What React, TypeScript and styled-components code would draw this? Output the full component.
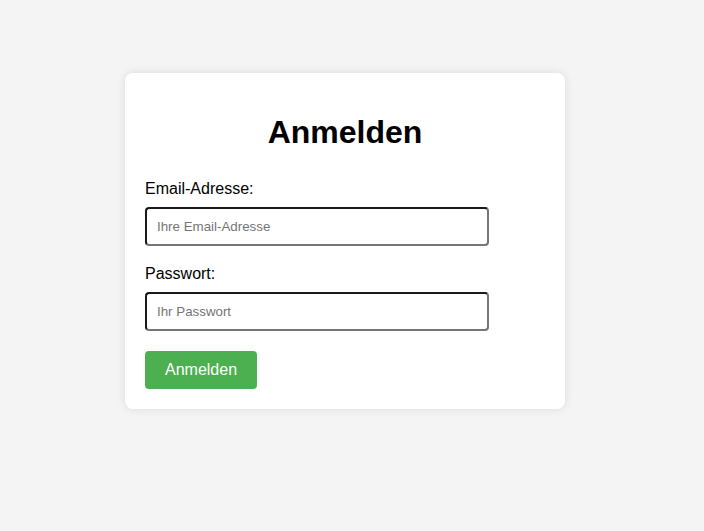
import React from "react";
import styled, { createGlobalStyle } from "styled-components";

const GlobalStyle = createGlobalStyle`
  html, body {
    margin: 0;
    padding: 0;
    background: #f4f4f4;
    font-family: "Liberation Sans", Arial, sans-serif;
  }
`;

const Page = styled.div`
  min-height: 531px;
  box-sizing: border-box;
  padding: 73px 0 0 125px;
`;

const Card = styled.div`
  width: 440px;
  box-sizing: border-box;
  padding: 20px;
  background: #ffffff;
  border-radius: 8px;
  box-shadow: 0 0 10px rgba(0, 0, 0, 0.1);
`;

const Title = styled.h1`
  margin: 21px 0 29px;
  font-size: 32px;
  font-weight: bold;
  text-align: center;
  color: #000;
`;

const Group = styled.div`
  margin-bottom: 19px;
`;

const Label = styled.label`
  display: block;
  font-size: 16px;
  color: #000;
  margin-bottom: 9px;
`;

const Input = styled.input`
  display: block;
  width: 320px;
  padding: 10px;
  font-family: "Liberation Sans", Arial, sans-serif;
  font-size: 13.333px;
  border-width: 2px;
  border-style: solid;
  border-color: #1a1a1a #767676 #767676 #1a1a1a;
  border-radius: 4px;
  background: #fff;
  outline: none;
  &::placeholder {
    color: #757575;
  }
`;

const Button = styled.button`
  margin-top: 1px;
  padding: 10px 20px;
  font-family: "Liberation Sans", Arial, sans-serif;
  font-size: 16px;
  color: #fff;
  background: #4caf50;
  border: none;
  border-radius: 4px;
  cursor: pointer;
`;

export default function App() {
  return (
    <>
      <GlobalStyle />
      <Page>
        <Card>
          <Title>Anmelden</Title>
          <form onSubmit={(e) => e.preventDefault()}>
            <Group>
              <Label htmlFor="email">Email-Adresse:</Label>
              <Input id="email" type="email" placeholder="Ihre Email-Adresse" />
            </Group>
            <Group>
              <Label htmlFor="pw">Passwort:</Label>
              <Input id="pw" type="password" placeholder="Ihr Passwort" />
            </Group>
            <Button type="submit">Anmelden</Button>
          </form>
        </Card>
      </Page>
    </>
  );
}
